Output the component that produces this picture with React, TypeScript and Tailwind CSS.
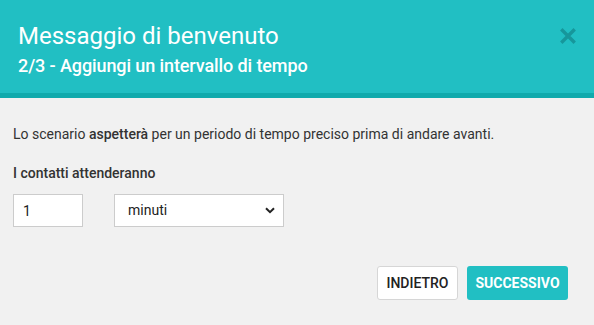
export default function App() {
  return (
    <div className="h-[325px] w-[594px] overflow-hidden bg-[#f1f1f1] font-['Roboto',sans-serif]">
      <header className="relative h-[98px] border-b-[5px] border-[#10aaac] bg-[#21bfc3] px-[18px] pt-[20px] text-white">
        <h1 className="text-[24px] leading-[32px]">Messaggio di benvenuto</h1>
        <h2 className="mt-[2px] text-[18px] font-medium leading-[24px] tracking-[-0.1px]">
          2/3 - Aggiungi un intervallo di tempo
        </h2>
        <button
          type="button"
          className="absolute top-[28px] right-[18px] text-[#16979b]"
          aria-label="Chiudi"
        >
          <svg width="16" height="16" viewBox="0 0 16 16">
            <path
              d="M2.5 2.5 L13.5 13.5 M13.5 2.5 L2.5 13.5"
              stroke="currentColor"
              strokeWidth="3.4"
              strokeLinecap="square"
            />
          </svg>
        </button>
      </header>

      <div className="px-[13px] pt-[26px] text-[14px] text-[#333]">
        <p className="leading-[20px]">
          Lo scenario <strong className="font-medium">aspetterà</strong> per un
          periodo di tempo preciso prima di andare avanti.
        </p>

        <label className="mt-[19px] block font-medium leading-[20px]">
          I contatti attenderanno
        </label>
        <div className="mt-[11px] flex gap-[31px]">
          <input
            type="text"
            defaultValue="1"
            className="h-[33px] w-[70px] border border-[#ccc] bg-white px-[9px] text-[14px] text-[#222] outline-none"
          />
          <div className="relative">
            <select className="h-[33px] w-[170px] appearance-none border border-[#ccc] bg-white pl-[13px] text-[14px] text-[#222] outline-none">
              <option>minuti</option>
            </select>
            <svg
              className="pointer-events-none absolute top-[13px] right-[9px]"
              width="10"
              height="7"
              viewBox="0 0 10 7"
            >
              <path d="M1 1.2 L5 5.2 L9 1.2" fill="none" stroke="#222" strokeWidth="2" />
            </svg>
          </div>
        </div>

        <div className="mt-[39px] flex justify-end gap-[9px] pr-[13px]">
          <button
            type="button"
            className="h-[34px] w-[81px] rounded-[3px] border border-[#d6d6d6] bg-white text-[14px] font-medium text-[#222]"
          >
            INDIETRO
          </button>
          <button
            type="button"
            className="h-[34px] w-[101px] rounded-[3px] bg-[#21bfc3] text-[14px] font-bold text-white"
          >
            SUCCESSIVO
          </button>
        </div>
      </div>
    </div>
  );
}
